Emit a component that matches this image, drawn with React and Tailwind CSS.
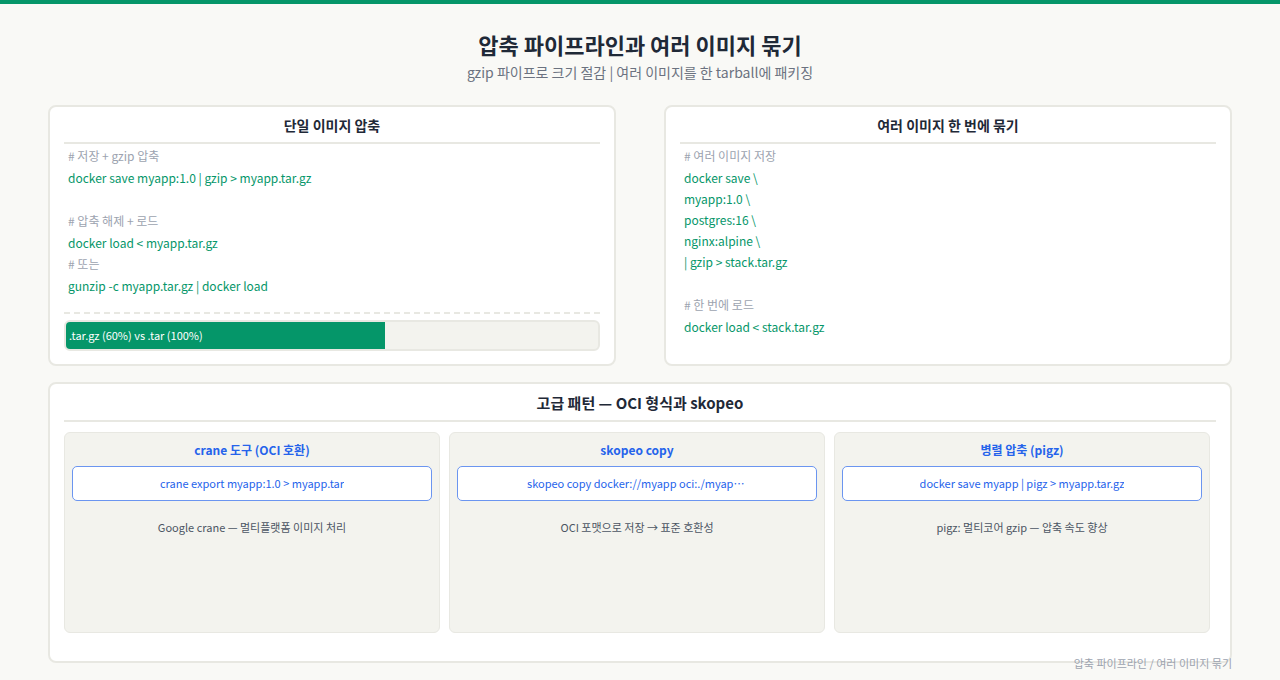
export default function App() {
  const f = { fontFamily: '"Noto Sans CJK KR","Noto Sans",sans-serif' };
  const C = ({ children }) => <div className="text-[12px] text-[#9ca3af] leading-[22px]">{children}</div>;
  const G = ({ children }) => <div className="text-[12px] text-[#059669] leading-[21px]">{children}</div>;
  const B = () => <div className="h-[22px]" />;
  const cols = [
    ["crane 도구 (OCI 호환)", "crane export myapp:1.0 > myapp.tar", "Google crane — 멀티플랫폼 이미지 처리"],
    ["skopeo copy", "skopeo copy docker://myapp oci:./myapp:1.0", "OCI 포맷으로 저장 → 표준 호환성"],
    ["병렬 압축 (pigz)", "docker save myapp | pigz > myapp.tar.gz", "pigz: 멀티코어 gzip — 압축 속도 향상"],
  ];
  return (
    <div style={f} className="w-[1280px] h-[680px] bg-[#f9f9f6] border-t-4 border-[#059669] relative overflow-hidden">
      <div className="text-center pt-[24px]">
        <div className="text-[22px] font-bold text-[#1f2937] leading-[32px]">압축 파이프라인과 여러 이미지 묶기</div>
        <div className="text-[14px] text-[#6b7280] mt-[2px] leading-[20px]">gzip 파이프로 크기 절감 | 여러 이미지를 한 tarball에 패키징</div>
      </div>
      <div className="px-[48px] mt-[23px] grid grid-cols-2 gap-[48px]">
        <div className="h-[261px] bg-white border-2 border-[#e8e8e2] rounded-[8px] px-[14px]">
          <div className="text-center text-[14px] font-bold text-[#1f2937] pt-[8px] pb-[6px] border-b-2 border-[#e8e8e2]">단일 이미지 압축</div>
          <div className="px-[4px] pt-[1px]">
            <C># 저장 + gzip 압축</C><G>docker save myapp:1.0 | gzip &gt; myapp.tar.gz</G><B />
            <C># 압축 해제 + 로드</C><G>docker load &lt; myapp.tar.gz</G><C># 또는</C><G>gunzip -c myapp.tar.gz | docker load</G>
          </div>
          <div className="border-t-2 border-dashed border-[#e8e8e2] mt-[16px]" />
          <div className="mt-[6px] h-[31px] rounded-[6px] bg-[#f3f3ee] border-2 border-[#e8e8e2] overflow-hidden flex">
            <div className="w-[60%] bg-[#059669] text-white text-[11px] flex items-center pl-[3px]">.tar.gz (60%) vs .tar (100%)</div>
          </div>
        </div>
        <div className="h-[261px] bg-white border-2 border-[#e8e8e2] rounded-[8px] px-[14px]">
          <div className="text-center text-[14px] font-bold text-[#1f2937] pt-[8px] pb-[6px] border-b-2 border-[#e8e8e2]">여러 이미지 한 번에 묶기</div>
          <div className="px-[4px] pt-[1px]">
            <C># 여러 이미지 저장</C><G>docker save \</G><G>myapp:1.0 \</G><G>postgres:16 \</G><G>nginx:alpine \</G><G>| gzip &gt; stack.tar.gz</G><B />
            <C># 한 번에 로드</C><G>docker load &lt; stack.tar.gz</G>
          </div>
        </div>
      </div>
      <div className="mx-[48px] mt-[16px] h-[281px] bg-white border-2 border-[#e8e8e2] rounded-[8px] px-[14px]">
        <div className="text-center text-[15px] font-bold text-[#1f2937] pt-[8px] pb-[5px] border-b-2 border-[#e8e8e2]">고급 패턴 — OCI 형식과 skopeo</div>
        <div className="grid grid-cols-3 gap-[9px] mt-[10px] pr-[6px]">
          {cols.map(([t, c, d]) => (
            <div key={t} className="h-[201px] bg-[#f3f3ee] border border-[#e8e8e2] rounded-[6px] px-[7px]">
              <div className="text-center text-[12px] font-bold text-[#2563eb] pt-[8px] leading-[18px]">{t}</div>
              <div className="mt-[7px] h-[35px] bg-white border-[1.5px] border-[#6b95f0] rounded-[5px] flex items-center justify-center px-[10px]">
                <span className="text-[11px] text-[#2563eb] truncate max-w-[220px]">{c}</span>
              </div>
              <div className="text-center text-[11px] text-[#4b5563] mt-[18px]">{d}</div>
            </div>
          ))}
        </div>
      </div>
      <div className="absolute right-[48px] top-[651px] text-[11px] text-[#9ca3af]">압축 파이프라인 / 여러 이미지 묶기</div>
    </div>
  );
}
